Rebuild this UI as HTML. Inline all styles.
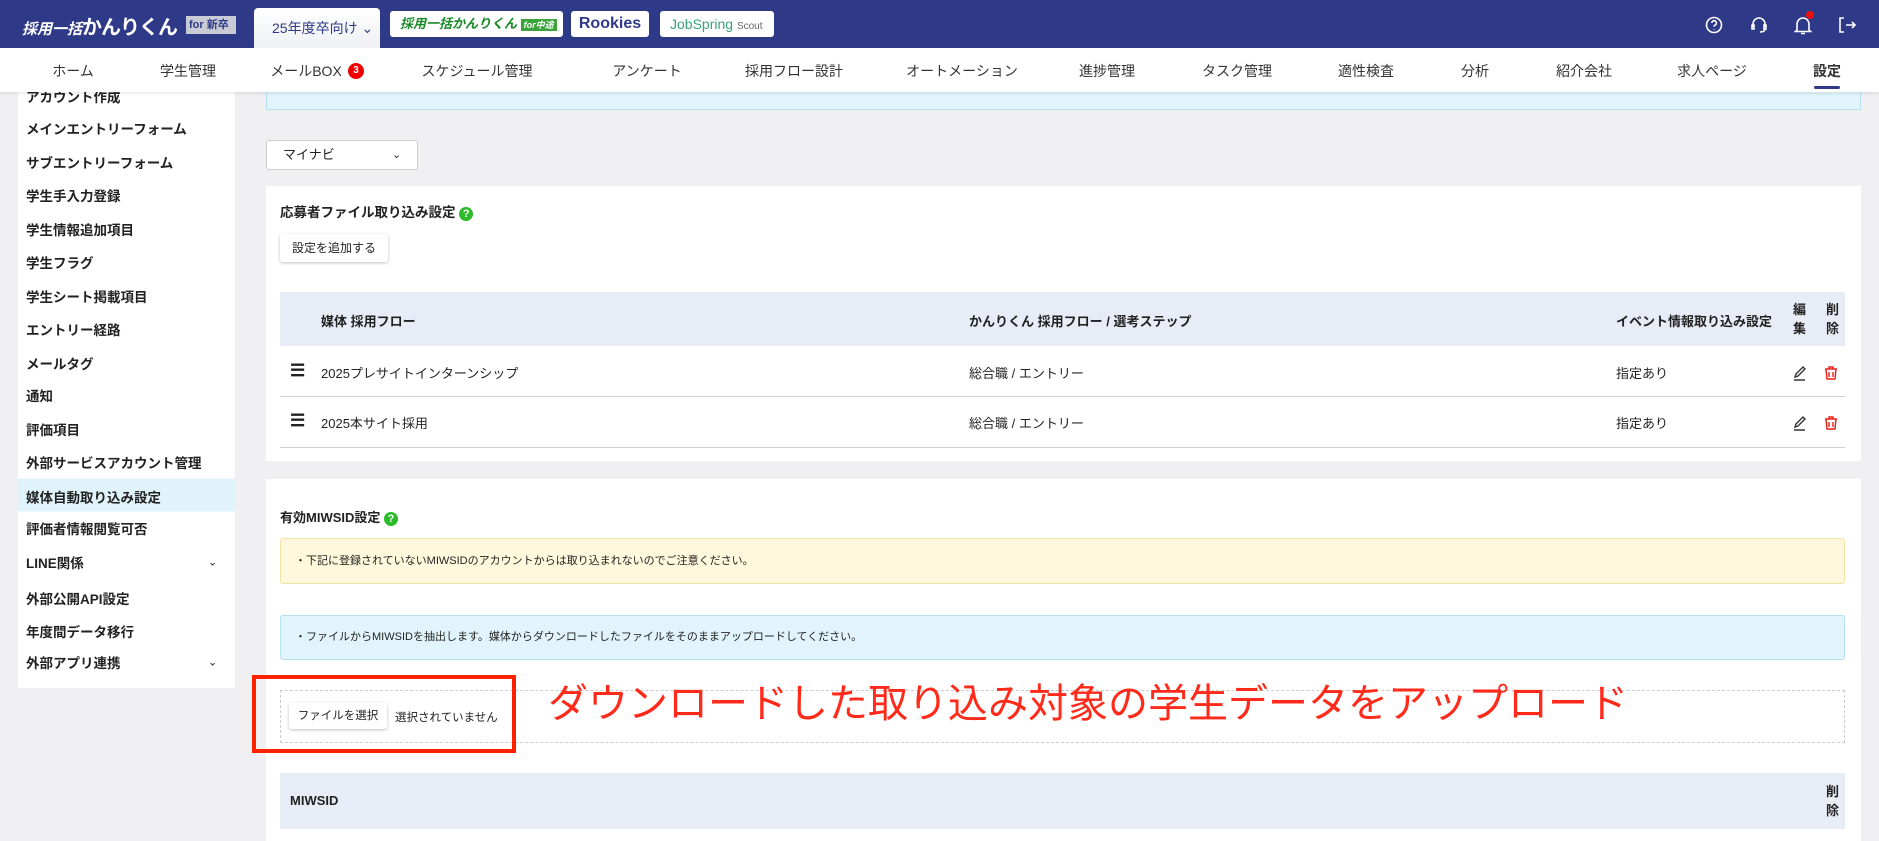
<!DOCTYPE html>
<html><head><meta charset="utf-8"><style>
*{box-sizing:border-box;margin:0;padding:0}
body{width:1879px;height:841px;overflow:hidden;background:#f0f0f3;font-family:"Liberation Sans","Noto Sans CJK JP",sans-serif;color:#222;position:relative}
.abs{position:absolute}
.hdr{left:0;top:0;width:1879px;height:48px;background:#2e3a87}
.nav{left:0;top:48px;width:1879px;height:44px;background:#fff;box-shadow:0 2px 3px rgba(0,0,0,.08);z-index:2}
.nav span{position:absolute;top:13px;font-size:14px;color:#333;transform:translateX(-50%);white-space:nowrap}
.side{left:18px;top:92px;width:217px;height:596px;background:#fff}
.side div{position:absolute;left:8px;font-size:13.5px;font-weight:bold;color:#222;transform:translateY(-50%);white-space:nowrap}
.card{background:#fff;left:266px;width:1595px}
.th{background:#e8ecf6}
.b{font-weight:bold;font-size:13px}
.t{font-size:13px}
.btn{background:#fff;border-radius:3px;box-shadow:0 1px 3px rgba(0,0,0,.25);font-size:12px;text-align:center}
</style></head><body>
<div class="abs hdr"></div>
<div class="abs" style="left:22px;top:11px;color:#fff;font-weight:bold;font-style:italic;font-size:15px;white-space:nowrap">採用一括<span style="font-size:20px;font-style:normal;letter-spacing:-1px">かんりくん</span></div>
<div class="abs" style="left:186px;top:16px;width:50px;height:18px;background:#c8cbd6;color:#2e3a87;font-size:11px;font-weight:bold;padding-left:3px;line-height:18px;white-space:nowrap">for 新卒</div>
<div class="abs" style="left:254px;top:8px;width:126px;height:40px;background:linear-gradient(#fff,#eef0f3);border-radius:4px 4px 0 0;color:#2e3a87;font-size:14px;line-height:40px;padding-left:18px">25年度卒向け ⌄</div>
<div class="abs" style="left:390px;top:11px;width:173px;height:26px;background:#fff;border-radius:3px;color:#1a8a2a;font-weight:bold;font-style:italic;font-size:13px;line-height:26px;padding-left:10px;white-space:nowrap">採用一括かんりくん <span style="background:#3aa33a;color:#fff;font-size:9px;padding:1px 3px">for中途</span></div>
<div class="abs" style="left:571px;top:11px;width:78px;height:26px;background:#fff;border-radius:3px;color:#2e3a87;font-weight:bold;font-size:16px;line-height:26px;text-align:center">Rookies</div>
<div class="abs" style="left:660px;top:11px;width:114px;height:26px;background:#fff;border-radius:3px;color:#3aa37a;font-size:14px;line-height:26px;padding-left:10px">JobSpring <span style="font-size:10px;color:#666">Scout</span></div>
<svg class="abs" style="left:1704px;top:14px" width="170" height="22" fill="none" stroke="#fff" stroke-width="1.6">
<circle cx="10" cy="11" r="7.5"/><path d="M7.8 9a2.3 2.3 0 1 1 3 2.2c-.7.3-.8.8-.8 1.5M10 15v.5"/>
<path d="M49 13v-3a6 6 0 0 1 12 0v3M48 11h2v4h-2zM60 11h2v4h-2zM61 15q0 3-5 3"/>
<path d="M93 16V10a6 6 0 0 1 12 0v6l1.5 1.5h-15zM97 19.5h4"/>
<path d="M140 4h-4v14h4M142 11h9M148 8l3 3-3 3"/>
</svg>
<div class="abs" style="left:1806px;top:11px;width:8px;height:8px;border-radius:50%;background:#f01010"></div>
<div class="abs nav">
<span style="left:73px">ホーム</span><span style="left:188px">学生管理</span><span style="left:306px">メールBOX</span>
<span style="left:356px;top:15px;width:16px;height:16px;border-radius:50%;background:#e00;color:#fff;font-size:10px;font-weight:bold;text-align:center;line-height:16px">3</span>
<span style="left:477px">スケジュール管理</span><span style="left:647px">アンケート</span><span style="left:794px">採用フロー設計</span><span style="left:962px">オートメーション</span><span style="left:1107px">進捗管理</span><span style="left:1237px">タスク管理</span><span style="left:1366px">適性検査</span><span style="left:1475px">分析</span><span style="left:1584px">紹介会社</span><span style="left:1712px">求人ページ</span><span style="left:1827px;font-weight:bold">設定</span>
<span style="left:1827px;top:38px;width:26px;height:3px;border-radius:2px;background:#2e3a87"></span>
</div>
<div class="abs side">
<div style="top:4px">アカウント作成</div><div style="top:36px">メインエントリーフォーム</div><div style="top:70px">サブエントリーフォーム</div><div style="top:103px">学生手入力登録</div><div style="top:137px">学生情報追加項目</div><div style="top:170px">学生フラグ</div><div style="top:204px">学生シート掲載項目</div><div style="top:237px">エントリー経路</div><div style="top:271px">メールタグ</div><div style="top:303px">通知</div><div style="top:337px">評価項目</div><div style="top:370px">外部サービスアカウント管理</div>
<div style="left:0;top:403px;width:217px;height:33px;background:#e0f3fb;padding:8px 0 0 8px">媒体自動取り込み設定</div>
<div style="top:436px">評価者情報閲覧可否</div><div style="top:470px">LINE関係</div><div style="top:470px;left:190px;font-weight:normal;font-size:11px">⌄</div><div style="top:506px">外部公開API設定</div><div style="top:539px">年度間データ移行</div><div style="top:570px">外部アプリ連携</div><div style="top:570px;left:190px;font-weight:normal;font-size:11px">⌄</div>
</div>
<div class="abs" style="left:266px;top:88px;width:1595px;height:22px;background:#e1f4fb;border:1px solid #b8e0f0;border-top:none"></div>
<div class="abs" style="left:266px;top:140px;width:152px;height:30px;background:#fff;border:1px solid #ccc;border-radius:3px;font-size:13px;line-height:28px;padding-left:16px">マイナビ<span style="position:absolute;left:125px;font-size:11px">⌄</span></div>
<div class="abs card" style="top:186px;height:275px"></div>
<div class="abs b" style="left:280px;top:201px;font-size:13.5px">応募者ファイル取り込み設定 <span style="display:inline-block;width:14px;height:14px;border-radius:50%;background:#2bbb2b;color:#fff;font-size:11px;text-align:center;line-height:14px">?</span></div>
<div class="abs btn" style="left:280px;top:234px;width:108px;height:28px;line-height:28px">設定を追加する</div>
<div class="abs th" style="left:280px;top:292px;width:1565px;height:54px"></div>
<div class="abs b" style="left:321px;top:311px">媒体 採用フロー</div>
<div class="abs b" style="left:969px;top:311px">かんりくん 採用フロー / 選考ステップ</div>
<div class="abs b" style="left:1616px;top:311px">イベント情報取り込み設定</div>
<div class="abs b" style="left:1793px;top:300px;width:14px;line-height:19px">編集</div>
<div class="abs b" style="left:1826px;top:300px;width:14px;line-height:19px">削除</div>
<div class="abs" style="left:280px;top:396px;width:1565px;height:1px;background:#ccd2dc"></div>
<div class="abs" style="left:280px;top:447px;width:1565px;height:1px;background:#ccd2dc"></div>
<div class="abs t" style="left:290px;top:361px;font-size:17px;font-weight:bold">☰</div><div class="abs t" style="left:321px;top:363px">2025プレサイトインターンシップ</div><div class="abs t" style="left:969px;top:363px">総合職 / エントリー</div><div class="abs t" style="left:1616px;top:363px">指定あり</div>
<div class="abs t" style="left:290px;top:411px;font-size:17px;font-weight:bold">☰</div><div class="abs t" style="left:321px;top:413px">2025本サイト採用</div><div class="abs t" style="left:969px;top:413px">総合職 / エントリー</div><div class="abs t" style="left:1616px;top:413px">指定あり</div>
<svg class="abs" style="left:1792px;top:364px" width="60" height="70" fill="none" stroke-width="1.4">
<g stroke="#333"><path d="M3 13l1-3 7-7 2 2-7 7zM2 16h11"/><path d="M3 63l1-3 7-7 2 2-7 7zM2 66h11"/></g>
<g stroke="#e8201a"><path d="M33 5h12M37 5V3h4v2M34 5l1 10h8l1-10M37 8v5M41 8v5"/><path d="M33 55h12M37 55v-2h4v2M34 55l1 10h8l1-10M37 58v5M41 58v5"/></g>
</svg>
<div class="abs card" style="top:479px;height:362px"></div>
<div class="abs b" style="left:280px;top:507px">有効MIWSID設定 <span style="display:inline-block;width:14px;height:14px;border-radius:50%;background:#2bbb2b;color:#fff;font-size:11px;text-align:center;line-height:14px">?</span></div>
<div class="abs" style="left:280px;top:538px;width:1565px;height:46px;background:#fff8dc;border:1px solid #f3e2a6;border-radius:3px;font-size:11px;line-height:44px;padding-left:14px">・下記に登録されていないMIWSIDのアカウントからは取り込まれないのでご注意ください。</div>
<div class="abs" style="left:280px;top:615px;width:1565px;height:45px;background:#e1f4fb;border:1px solid #b8e0f0;border-radius:3px;font-size:11px;line-height:43px;padding-left:14px">・ファイルからMIWSIDを抽出します。媒体からダウンロードしたファイルをそのままアップロードしてください。</div>
<div class="abs" style="left:280px;top:690px;width:1565px;height:53px;border:1px dashed #ccc"></div>
<div class="abs btn" style="left:289px;top:703px;width:98px;height:26px;line-height:26px;font-size:11.5px">ファイルを選択</div>
<div class="abs" style="left:395px;top:709px;font-size:11.5px">選択されていません</div>
<div class="abs" style="left:252px;top:675px;width:264px;height:78px;border:4px solid #ff2200"></div>
<div class="abs" style="left:548px;top:680px;font-size:40px;color:#ff2a1a;white-space:nowrap;line-height:48px">ダウンロードした取り込み対象の学生データをアップロード</div>
<div class="abs th" style="left:280px;top:773px;width:1565px;height:56px"></div>
<div class="abs b" style="left:290px;top:793px">MIWSID</div>
<div class="abs b" style="left:1826px;top:782px;width:14px;line-height:19px">削除</div>
</body></html>
